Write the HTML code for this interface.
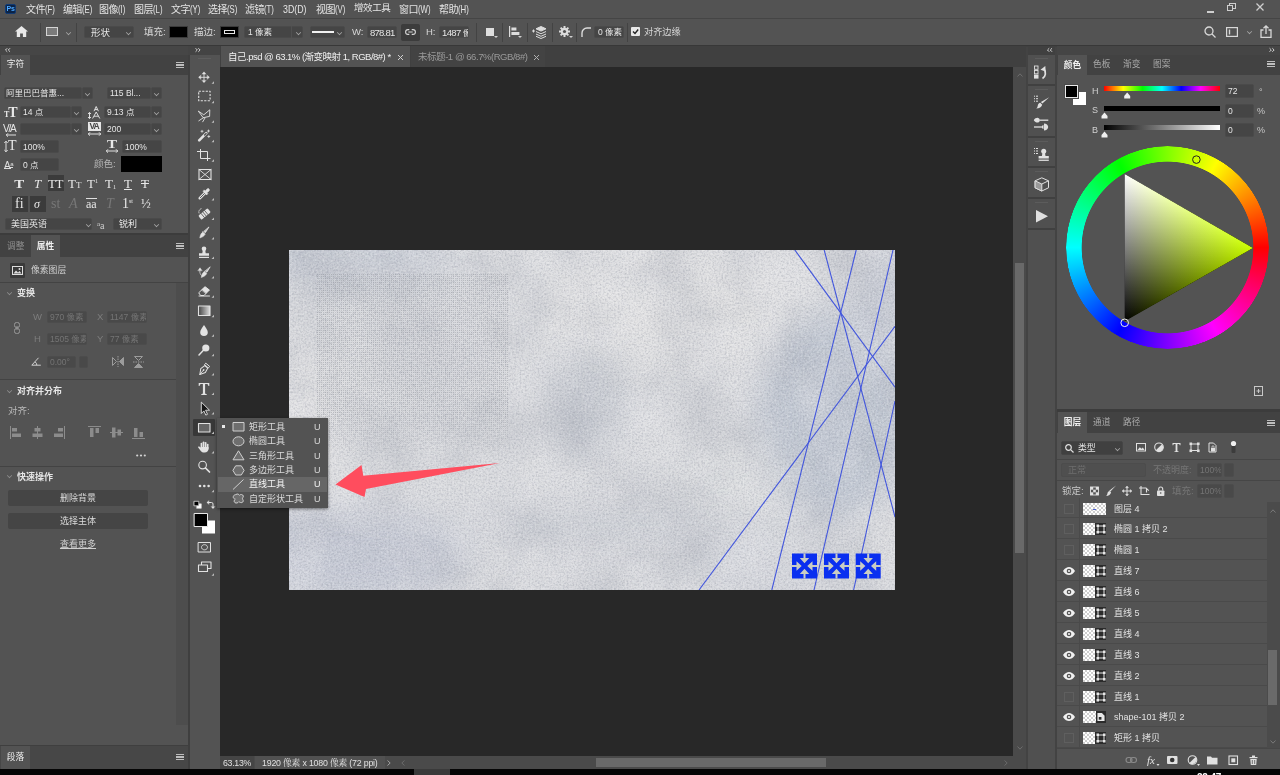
<!DOCTYPE html>
<html lang="zh-CN"><head><meta charset="utf-8"><title>Photoshop</title>
<style>
*{box-sizing:border-box;margin:0;padding:0}
html,body{width:1280px;height:775px;overflow:hidden;background:#535353}
body{position:relative;font-family:"Liberation Sans","Noto Sans CJK SC",sans-serif;font-size:9px;color:#dcdcdc;line-height:1}
.a{position:absolute}
.t{position:absolute;white-space:nowrap;line-height:12px;height:12px;font-size:9px;color:#d8d8d8}
.m{position:absolute;white-space:nowrap;top:3px;line-height:12px;height:12px;font-size:10px;color:#e4e4e4;letter-spacing:-.4px}
.m i{font-style:normal;font-size:10.5px;display:inline-block;transform:scaleX(.74);transform-origin:0 50%;letter-spacing:0}
.in{position:absolute;background:#454545;border:1px solid #4a4a4a;border-radius:2px;color:#e6e6e6;font-size:8.5px;line-height:11px;padding:0 0 0 3px;white-space:nowrap;overflow:hidden}
.in.d{color:#747474;background:#494949;border-color:#4c4c4c}
.dim{color:#7d7d7d}
svg{position:absolute;overflow:visible}
.cv{position:absolute;width:5px;height:5px}
.cv:before{content:"";position:absolute;left:0;top:-1px;width:4px;height:4px;border-right:1px solid #a6a6a6;border-bottom:1px solid #a6a6a6;transform:rotate(45deg) scale(.75)}
.tabbar{position:absolute;background:#424242}
.tab{position:absolute;background:#535353;color:#f0f0f0;font-size:8.7px;line-height:12px;white-space:nowrap;text-align:center}
.tabi{position:absolute;color:#a9a9a9;font-size:8.7px;line-height:12px;white-space:nowrap}
.mn{position:absolute;width:8px;height:6px;background:linear-gradient(#bebebe 0 1.300px,transparent 0 2.350px,#bebebe 0 3.650px,transparent 0 4.700px,#bebebe 0 6px)}
.vs{position:absolute;width:1px;background:#434343}
.hs{position:absolute;height:1px;background:#434343}
.hd{position:absolute;font-size:9px;font-weight:bold;color:#e6e6e6;white-space:nowrap;line-height:12px}
.btn{position:absolute;background:#454545;border-radius:2px;color:#dcdcdc;font-size:9px;line-height:16px;text-align:center}
.lr{position:absolute;left:1057px;width:210px;height:21px;border-bottom:1px solid #4a4a4a}
.ln{position:absolute;left:57px;top:5px;font-size:9px;line-height:12px;color:#e2e2e2;white-space:nowrap}
.cb{position:absolute;left:7px;top:6px;width:10px;height:10px;border:1px solid #5f5f5f}
.th{position:absolute;left:26px;top:5px;width:23px;height:12px;background:#2b2b2b}
.ck{position:absolute;left:0;top:0;width:12px;height:12px;background-color:#fff;background-image:conic-gradient(#cfcfcf 25%,#fff 0 50%,#cfcfcf 0 75%,#fff 0);background-size:4px 4px}
</style></head><body><div id="root" style="position:absolute;left:0;top:0;width:1280px;height:775px;will-change:transform">
<!-- ===== MENU BAR ===== -->
<div class="a" style="left:0;top:0;width:1280px;height:18px;background:#535353">
 <div class="a" style="left:5px;top:4px;width:11px;height:10px;background:#0a2347;border:1px solid #123a72;border-radius:2px;color:#4aa8ff;font-size:7px;font-weight:bold;line-height:8px;text-align:center;letter-spacing:-.4px">Ps</div>
 <div class="m" style="left:26px">文件<i>(F)</i></div>
 <div class="m" style="left:63px">编辑<i>(E)</i></div>
 <div class="m" style="left:99px">图像<i>(I)</i></div>
 <div class="m" style="left:134px">图层<i>(L)</i></div>
 <div class="m" style="left:171px">文字<i>(Y)</i></div>
 <div class="m" style="left:208px">选择<i>(S)</i></div>
 <div class="m" style="left:245px">滤镜<i>(T)</i></div>
 <div class="m" style="left:283px"><i style="font-size:10.5px;transform:scaleX(.84)">3D(D)</i></div>
 <div class="m" style="left:316px">视图<i>(V)</i></div>
 <div class="m" style="left:354px;top:2px;font-size:9.5px">增效工具</div>
 <div class="m" style="left:399px">窗口<i>(W)</i></div>
 <div class="m" style="left:439px">帮助<i>(H)</i></div>
 <!-- window controls -->
 <div class="a" style="left:1207px;top:11px;width:7px;height:2px;background:#cfcfcf"></div>
 <svg style="left:1227px;top:3px" width="9" height="8" viewBox="0 0 9 8" fill="none" stroke="#cfcfcf" stroke-width="1"><rect x="2.5" y="0.5" width="6" height="5"/><rect x="0.5" y="2.5" width="5" height="5" fill="#535353"/></svg>
 <svg style="left:1256px;top:3px" width="8" height="8" viewBox="0 0 8 8" stroke="#cfcfcf" stroke-width="1.3"><path d="M.5.5l7 7M7.5.5l-7 7"/></svg>
</div>
<div class="a" style="left:0;top:18px;width:1280px;height:1px;background:#454545"></div>

<!-- ===== OPTIONS BAR ===== -->
<div class="a" style="left:0;top:19px;width:1280px;height:26px;background:#535353">
 <!-- home -->
 <svg style="left:15px;top:7px" width="13" height="11" viewBox="0 0 13 11"><path d="M6.5 0L0 5.6h1.8V11h3.3V7.4h2.8V11h3.3V5.6H13z" fill="#e8e8e8"/></svg>
 <div class="vs" style="left:40px;top:4px;height:19px"></div>
 <!-- rect tool -->
 <div class="a" style="left:46px;top:8px;width:12px;height:9px;border:1px solid #d4d4d4;background:#7b7b7b"></div>
 <div class="cv" style="left:66px;top:12px"></div>
 <div class="vs" style="left:76px;top:4px;height:19px"></div>
 <div class="in" style="left:84px;top:7px;width:50px;height:12px;padding-left:6px;font-size:9.5px">形状</div>
 <div class="cv" style="left:126px;top:12px"></div>
 <div class="t" style="left:144px;top:7px;font-size:9.5px">填充:</div>
 <div class="a" style="left:169px;top:7px;width:19px;height:12px;background:#000;border:1px solid #3a3a3a"></div>
 <div class="t" style="left:194px;top:7px;font-size:9.5px">描边:</div>
 <div class="a" style="left:220px;top:7px;width:19px;height:12px;background:#000;border:1px solid #3a3a3a"></div>
 <div class="a" style="left:224px;top:11px;width:11px;height:4px;border:1px solid #e6e6e6"></div>
 <div class="in" style="left:244px;top:7px;width:59px;height:12px;font-size:8.5px">1 像素</div>
 <div class="vs" style="left:291px;top:7px;height:12px;background:#505050"></div>
 <div class="cv" style="left:296px;top:12px"></div>
 <div class="in" style="left:310px;top:7px;width:35px;height:12px"></div>
 <div class="a" style="left:312px;top:12px;width:22px;height:2px;background:#f0f0f0"></div>
 <div class="cv" style="left:337px;top:12px"></div>
 <div class="t" style="left:352px;top:7px;font-size:9.5px">W:</div>
 <div class="in" style="left:367px;top:7px;width:30px;height:12px;font-size:9.5px;padding-left:2px;letter-spacing:-.75px">878.81</div>
 <div class="a" style="left:401px;top:5px;width:19px;height:17px;background:#3c3c3c;border-radius:2px"></div>
 <svg style="left:405px;top:10px" width="11" height="6" viewBox="0 0 11 6" fill="none" stroke="#d8d8d8" stroke-width="1.1"><path d="M4.300.6H3a2.400 2.400 0 0 0 0 4.800h1.300M6.700.6H8a2.400 2.400 0 0 1 0 4.800H6.700M3.300 3h4.400"/></svg>
 <div class="t" style="left:426px;top:7px;font-size:9.5px">H:</div>
 <div class="in" style="left:439px;top:7px;width:30px;height:12px;font-size:9.5px;padding-left:2px;letter-spacing:-.6px">1487 <span style="font-size:8.5px">像</span></div>
 <div class="vs" style="left:476px;top:4px;height:19px"></div>
 <!-- path ops -->
 <div class="a" style="left:486px;top:9px;width:8px;height:8px;background:#dedede"></div>
 <div class="a" style="left:494px;top:17px;width:0;height:0;border-left:2px solid transparent;border-right:2px solid transparent;border-top:2px solid #d0d0d0"></div>
 <!-- align -->
 <svg style="left:509px;top:7px" width="11" height="12" viewBox="0 0 11 12" fill="#dcdcdc"><rect x="0" y="0" width="1.2" height="11"/><rect x="2.4" y="1.5" width="5" height="3"/><rect x="2.4" y="6" width="8" height="3"/></svg>
 <div class="a" style="left:518px;top:17px;width:0;height:0;border-left:2px solid transparent;border-right:2px solid transparent;border-top:2px solid #d0d0d0"></div>
 <!-- arrange -->
 <svg style="left:532px;top:6px" width="15" height="14" viewBox="0 0 15 14" fill="none" stroke="#dcdcdc" stroke-width="1"><path d="M9 1.5l5 2.3-5 2.3-5-2.3z" fill="#dcdcdc"/><path d="M4 6.5l5 2.3 5-2.3M4 9l5 2.3L14 9M4 11.3l5 2.2 5-2.2"/><path d="M0 6h3M1.5 4.5v3" stroke-width="1"/></svg>
 <!-- gear -->
 <svg style="left:559px;top:7px" width="11" height="11" viewBox="0 0 11 11"><g fill="#dcdcdc"><circle cx="5.5" cy="5.5" r="3.7"/><g id="gt"><rect x="4.5" y="0" width="2" height="11"/><rect x="0" y="4.5" width="11" height="2"/></g><use href="#gt" transform="rotate(45 5.5 5.5)"/></g><circle cx="5.5" cy="5.5" r="1.6" fill="#535353"/></svg>
 <div class="a" style="left:569px;top:17px;width:0;height:0;border-left:2px solid transparent;border-right:2px solid transparent;border-top:2px solid #d0d0d0"></div>
 <div class="vs" style="left:576px;top:4px;height:19px"></div><div class="vs" style="left:502px;top:4px;height:19px"></div><div class="vs" style="left:527px;top:4px;height:19px"></div><div class="vs" style="left:552px;top:4px;height:19px"></div><div class="vs" style="left:627px;top:4px;height:19px"></div>
 <svg style="left:581px;top:8px" width="10" height="10" viewBox="0 0 10 10" fill="none" stroke="#dcdcdc" stroke-width="1.4"><path d="M1 10V6a5 5 0 0 1 5-5h4"/></svg>
 <div class="in" style="left:594px;top:7px;width:30px;height:12px;font-size:8.5px;padding-left:3px">0 像素</div>
 <div class="a" style="left:631px;top:8px;width:9px;height:9px;background:#e8e8e8;border-radius:1px"></div>
 <svg style="left:632px;top:9px" width="7" height="7" viewBox="0 0 7 7" fill="none" stroke="#222" stroke-width="1.4"><path d="M1 3.5l2 2 3.2-4"/></svg>
 <div class="t" style="left:644px;top:7px;font-size:9.2px">对齐边缘</div>
 <!-- right icons -->
 <svg style="left:1204px;top:7px" width="12" height="12" viewBox="0 0 12 12" fill="none" stroke="#d8d8d8" stroke-width="1.3"><circle cx="5" cy="5" r="4"/><path d="M8 8l3.5 3.5"/></svg>
 <svg style="left:1226px;top:8px" width="12" height="10" viewBox="0 0 12 10" fill="none" stroke="#d8d8d8" stroke-width="1.2"><rect x=".6" y=".6" width="10.8" height="8.8"/><path d="M3.5 2.5v5" stroke-width="1.4"/></svg>
 <div class="cv" style="left:1247px;top:11px"></div>
 <svg style="left:1260px;top:6px" width="12" height="13" viewBox="0 0 12 13" fill="none" stroke="#d8d8d8" stroke-width="1.3"><path d="M3.5 5H1v7.3h10V5H8.5M6 9V1M3.5 3.2L6 .8l2.5 2.4"/></svg>
</div>
<div class="a" style="left:0;top:45px;width:1280px;height:1px;background:#383838"></div>
<!-- ===== LEFT PANEL ===== -->
<div class="a" style="left:0;top:47px;width:188px;height:722px;background:#535353"></div>
<div class="a" style="left:0;top:46px;width:190px;height:9px;background:#464646"></div>
<svg style="left:4.500px;top:48px" width="5.600" height="4" viewBox="0 0 7 5" fill="none" stroke="#d8d8d8" stroke-width="1.200"><path d="M2.800.3L.6 2.500l2.200 2.200M6.300.3L4.100 2.500l2.200 2.200"/></svg>
<div class="tabbar" style="left:0;top:55px;width:188px;height:20px"></div>
<div class="tab" style="left:1px;top:55px;width:29px;height:21px;padding-top:3px">字符</div>
<div class="mn" style="left:176px;top:62px"></div>

<!-- character rows -->
<div class="in" style="left:4px;top:87px;width:78px;height:12px;padding-left:1px">阿里巴巴普惠...</div>
<div class="in" style="left:82px;top:87px;width:11px;height:12px"></div><div class="cv" style="left:85px;top:92px"></div>
<div class="in" style="left:107px;top:87px;width:44px;height:12px;padding-left:2px">115 Bl...</div>
<div class="in" style="left:151px;top:87px;width:11px;height:12px"></div><div class="cv" style="left:154px;top:92px"></div>

<div class="t" style="left:4px;top:106px;font-family:'Liberation Serif',serif;font-size:8px;color:#e8e8e8;line-height:14px"><b>T</b><b style="font-size:14px;margin-left:-1px">T</b></div>
<div class="in" style="left:20px;top:106px;width:51px;height:12px;padding-left:2px">14 点</div>
<div class="in" style="left:71px;top:106px;width:11px;height:12px"></div><div class="cv" style="left:74px;top:111px"></div>
<svg style="left:88px;top:106px" width="13" height="13" viewBox="0 0 13 13" fill="none" stroke="#e0e0e0" stroke-width="1"><path d="M6 5.2L8.2.5l2.2 4.7M7 3.6h2.4M4.6 12.5L8.2 6l3.6 6.5M6 10.2h4.4M1.5 6.5v6M0 8l1.5-1.6L3 8M0 11l1.5 1.6L3 11"/></svg>
<div class="in" style="left:104px;top:106px;width:47px;height:12px;padding-left:2px">9.13 点</div>
<div class="in" style="left:151px;top:106px;width:11px;height:12px"></div><div class="cv" style="left:154px;top:111px"></div>

<div class="t" style="left:3px;top:123px;font-size:10px;color:#e8e8e8;letter-spacing:-1.2px">V/A</div>
<svg style="left:6px;top:133px" width="10" height="4" viewBox="0 0 10 4" fill="none" stroke="#e0e0e0" stroke-width="1"><path d="M0 2h10M2 .3L.3 2 2 3.7"/></svg>
<div class="in" style="left:20px;top:123px;width:51px;height:12px"></div>
<div class="in" style="left:71px;top:123px;width:11px;height:12px"></div><div class="cv" style="left:74px;top:128px"></div>
<div class="a" style="left:88px;top:122px;width:13px;height:9px;background:#e6e6e6;color:#444;font-size:8.5px;line-height:9px;font-weight:bold;letter-spacing:-1px;text-align:center;padding-right:1px">VA</div>
<svg style="left:88px;top:132px" width="13" height="4" viewBox="0 0 13 4" fill="none" stroke="#e0e0e0" stroke-width="1"><path d="M0 2h13M2 .3L.3 2 2 3.7M11 .3L12.7 2 11 3.7"/></svg>
<div class="in" style="left:104px;top:123px;width:47px;height:12px;padding-left:2px">200</div>
<div class="in" style="left:151px;top:123px;width:11px;height:12px"></div><div class="cv" style="left:154px;top:128px"></div>

<svg style="left:4px;top:141px" width="4" height="11" viewBox="0 0 4 11" fill="none" stroke="#e0e0e0" stroke-width="1"><path d="M2 0v11M.3 2L2 .3 3.7 2M.3 9L2 10.7 3.7 9"/></svg>
<div class="t" style="left:8px;top:139px;font-family:'Liberation Serif',serif;font-size:14px;line-height:14px;color:#e8e8e8">T</div>
<div class="in" style="left:20px;top:140px;width:39px;height:13px;padding:1px 0 0 2px">100%</div>
<div class="t" style="left:108px;top:138px;font-family:'Liberation Serif',serif;font-size:12px;line-height:12px;color:#e8e8e8;transform:scaleX(1.25);font-weight:bold">T</div>
<svg style="left:106px;top:149px" width="12" height="4" viewBox="0 0 12 4" fill="none" stroke="#e0e0e0" stroke-width="1"><path d="M0 2h12M2 .3L.3 2 2 3.7M10 .3L11.7 2 10 3.7"/></svg>
<div class="in" style="left:122px;top:140px;width:40px;height:13px;padding:1px 0 0 2px">100%</div>

<div class="t" style="left:4px;top:158px;font-size:10px;color:#e0e0e0;letter-spacing:-.5px">A<span style="font-size:6px;vertical-align:3px;border-bottom:1px solid #ddd">a</span></div>
<div class="a" style="left:4px;top:168px;width:7px;height:1px;background:#ddd"></div>
<div class="in" style="left:20px;top:158px;width:39px;height:13px;padding:1px 0 0 2px">0 点</div>
<div class="t" style="left:94px;top:158px;font-size:9.5px;color:#b4b4b4">颜色:</div>
<div class="a" style="left:121px;top:156px;width:41px;height:16px;background:#000"></div>

<!-- T style row -->
<div class="a" style="left:48px;top:175px;width:16px;height:16px;background:#3b3b3b"></div>
<div class="t" style="left:0;top:177px;width:188px;font-family:'Liberation Serif',serif;font-size:13px;line-height:13px;color:#e8e8e8">
 <b class="a" style="left:15px;transform:scaleX(1.15)">T</b>
 <i class="a" style="left:34px">T</i>
 <span class="a" style="left:48px;letter-spacing:-.5px">TT</span>
 <span class="a" style="left:68px">T<span style="font-size:9px">T</span></span>
 <span class="a" style="left:87px">T<span style="font-size:6px;position:relative;top:-5px">1</span></span>
 <span class="a" style="left:105px">T<span style="font-size:6px;position:relative;top:1px">1</span></span>
 <span class="a" style="left:124px;text-decoration:underline">T</span>
 <span class="a" style="left:141px;text-decoration:line-through">T</span>
</div>
<!-- fi row -->
<div class="a" style="left:12px;top:196px;width:16px;height:16px;background:#3b3b3b"></div>
<div class="a" style="left:30px;top:196px;width:16px;height:16px;background:#3b3b3b"></div>
<div class="t" style="left:0;top:197px;width:188px;font-family:'Liberation Serif',serif;font-size:14px;line-height:14px;color:#e8e8e8">
 <span class="a" style="left:15px">fi</span>
 <i class="a" style="left:34px;font-size:12px">σ</i>
 <span class="a" style="left:51px;color:#777">st</span>
 <i class="a" style="left:69px;color:#777">A</i>
 <span class="a" style="left:86px;font-size:12px;border-top:1px solid #e0e0e0;line-height:11px;top:1px">aa</span>
 <i class="a" style="left:106px;color:#777">T</i>
 <span class="a" style="left:122px">1<span style="font-size:6px;position:relative;top:-5px">st</span></span>
 <span class="a" style="left:141px;font-size:13px">½</span>
</div>
<div class="in" style="left:5px;top:218px;width:87px;height:12px;padding-left:5px;font-size:9px">美国英语</div><div class="cv" style="left:86px;top:223px"></div>
<div class="t" style="left:97px;top:218px;font-family:'Liberation Serif',serif;font-size:10px;color:#d0d0d0"><span style="font-size:7px;vertical-align:3px">a</span>a</div>
<div class="in" style="left:113px;top:218px;width:49px;height:12px;padding-left:5px;font-size:9px">锐利</div><div class="cv" style="left:154px;top:223px"></div>

<!-- properties panel -->
<div class="a" style="left:0;top:233px;width:188px;height:2px;background:#3c3c3c"></div>
<div class="tabbar" style="left:0;top:235px;width:188px;height:22px"></div>
<div class="tabi" style="left:7px;top:240px;color:#8f8f8f">调整</div>
<div class="tab" style="left:31px;top:235px;width:29px;height:23px;padding-top:5px;font-weight:bold">属性</div>
<div class="mn" style="left:176px;top:243px"></div>
<div class="a" style="left:10px;top:263px;width:15px;height:15px;background:#3a3a3a;border-radius:1px"></div>
<svg style="left:12px;top:266px" width="11" height="9" viewBox="0 0 11 9"><rect x=".5" y=".5" width="10" height="8" fill="none" stroke="#ddd"/><path d="M1.5 7.5l2.5-3 2 2 1.5-1.5 2 2.5z" fill="#ddd"/><circle cx="7.5" cy="3" r="1" fill="#ddd"/></svg>
<div class="t" style="left:31px;top:264px;color:#cfcfcf;font-size:8.8px">像素图层</div>
<div class="hs" style="left:0;top:282px;width:188px"></div>
<div class="a" style="left:176px;top:283px;width:12px;height:442px;background:#4d4d4d"></div>

<div class="cv" style="left:7px;top:291px;opacity:.7"></div>
<div class="hd" style="left:17px;top:287px">变换</div>
<div class="t dim" style="left:33px;top:311px;font-size:9.5px">W</div>
<div class="in d" style="left:47px;top:311px;width:40px;height:12px;padding-left:2px">970 像素</div>
<div class="t dim" style="left:97px;top:311px;font-size:9.5px">X</div>
<div class="in d" style="left:107px;top:311px;width:40px;height:12px;padding-left:2px">1147 像素</div>
<div class="t dim" style="left:34px;top:333px;font-size:9.5px">H</div>
<div class="in d" style="left:47px;top:333px;width:40px;height:12px;padding-left:2px">1505 像素</div>
<div class="t dim" style="left:97px;top:333px;font-size:9.5px">Y</div>
<div class="in d" style="left:107px;top:333px;width:40px;height:12px;padding-left:2px">77 像素</div>
<svg style="left:14px;top:322px" width="6" height="12" viewBox="0 0 6 12" fill="none" stroke="#9a9a9a" stroke-width="1"><rect x=".5" y=".5" width="5" height="5" rx="2"/><rect x=".5" y="6.5" width="5" height="5" rx="2"/><path d="M3 4v4"/></svg>
<svg style="left:31px;top:357px" width="10" height="9" viewBox="0 0 10 9" fill="none" stroke="#d0d0d0" stroke-width="1"><path d="M7.5.8L.8 8.2h9M4 4.8a4 4 0 0 1 1.8 3.4"/></svg>
<div class="in d" style="left:47px;top:356px;width:29px;height:12px;padding-left:2px">0.00°</div>
<div class="in d" style="left:79px;top:356px;width:9px;height:12px"></div>
<svg style="left:112px;top:356px" width="12" height="11" viewBox="0 0 12 11" fill="none" stroke="#9c9c9c" stroke-width="1"><path d="M.5 1.5v8l4-4z"/><path d="M11.5 1.5v8l-4-4z" fill="#9c9c9c"/><path d="M6 0v11" stroke-dasharray="1.5 1"/></svg>
<svg style="left:133px;top:356px" width="11" height="12" viewBox="0 0 11 12" fill="none" stroke="#9c9c9c" stroke-width="1"><path d="M1.5.5h8l-4 4z"/><path d="M1.5 11.5h8l-4-4z" fill="#9c9c9c"/><path d="M0 6h11" stroke-dasharray="1.5 1"/></svg>
<div class="hs" style="left:0;top:379px;width:176px"></div>

<div class="cv" style="left:7px;top:389px;opacity:.7"></div>
<div class="hd" style="left:17px;top:385px">对齐并分布</div>
<div class="t" style="left:8px;top:405px;color:#b8b8b8;font-size:9.5px">对齐:</div>
<svg style="left:10px;top:426px" width="135" height="13" viewBox="0 0 135 13" fill="#8c8c8c">
 <rect x="0" y="0" width="1" height="13"/><rect x="2" y="2" width="5" height="3.5"/><rect x="2" y="7.5" width="9" height="3.5"/>
 <rect x="27" y="0" width="1" height="13"/><rect x="24.5" y="2" width="6" height="3.5"/><rect x="22.5" y="7.5" width="10" height="3.5"/>
 <rect x="54" y="0" width="1" height="13"/><rect x="48" y="2" width="5" height="3.5"/><rect x="44" y="7.5" width="9" height="3.5"/>
 <rect x="78" y="0" width="13" height="1"/><rect x="80" y="2" width="3.5" height="9"/><rect x="85.5" y="2" width="3.5" height="5"/>
 <rect x="100" y="6" width="13" height="1"/><rect x="102" y="1.5" width="3.5" height="10"/><rect x="107.5" y="3.5" width="3.5" height="6"/>
 <rect x="122" y="12" width="13" height="1"/><rect x="124" y="2" width="3.5" height="9"/><rect x="129.5" y="6" width="3.5" height="5"/>
</svg>
<svg style="left:136px;top:454px" width="10" height="3" viewBox="0 0 10 3" fill="#d4d4d4"><circle cx="1.200" cy="1.500" r="1.100"/><circle cx="5" cy="1.500" r="1.100"/><circle cx="8.800" cy="1.500" r="1.100"/></svg>
<div class="hs" style="left:0;top:466px;width:176px"></div>

<div class="cv" style="left:7px;top:474px;opacity:.7"></div>
<div class="hd" style="left:17px;top:471px">快速操作</div>
<div class="btn" style="left:8px;top:490px;width:140px;height:16px">删除背景</div>
<div class="btn" style="left:8px;top:513px;width:140px;height:16px">选择主体</div>
<div class="t" style="left:8px;top:538px;width:140px;text-align:center;text-decoration:underline;color:#d0d0d0">查看更多</div>

<div class="a" style="left:0;top:745px;width:188px;height:1px;background:#3f3f3f"></div>
<div class="tabbar" style="left:0;top:746px;width:188px;height:23px;background:#474747"></div>
<div class="tab" style="left:1px;top:746px;width:29px;height:23px;padding-top:5px">段落</div>
<div class="mn" style="left:176px;top:754px"></div>
<div class="a" style="left:188px;top:55px;width:2px;height:714px;background:#3f3f3f"></div>
<!-- ===== TOOLBAR ===== -->
<div class="a" style="left:190px;top:47px;width:30px;height:722px;background:#535353"></div>
<div class="a" style="left:188px;top:46px;width:33px;height:9px;background:#444"></div>
<svg style="left:194.500px;top:48px" width="5.600" height="4" viewBox="0 0 7 5" fill="none" stroke="#d8d8d8" stroke-width="1.200"><path d="M.7.3l2.200 2.200L.7 4.700M4.200.3l2.200 2.200-2.200 2.200"/></svg>
<div class="a" style="left:198px;top:58px;width:13px;height:1px;background:#5e5e5e"></div>
<div class="a" style="left:193px;top:419px;width:22px;height:17px;background:#383838;border-radius:1px"></div>
<svg style="left:190px;top:47px" width="29" height="540" viewBox="190 47 29 540" fill="none" stroke="#e2e2e2" stroke-width="1.1" stroke-linecap="round" stroke-linejoin="round">
 <!-- corner ticks -->
 <g fill="#bdbdbd" stroke="none">
  <path d="M214 81.3v2.500h-2.500z"/><path d="M214 100.8v2.500h-2.500z"/><path d="M214 120.3v2.500h-2.500z"/><path d="M214 139.7v2.500h-2.500z"/><path d="M214 159.2v2.500h-2.500z"/>
  <path d="M214 198.1v2.500h-2.500z"/><path d="M214 217.5v2.500h-2.500z"/><path d="M214 237.0v2.500h-2.500z"/><path d="M214 256.4v2.500h-2.500z"/><path d="M214 275.9v2.500h-2.500z"/>
  <path d="M214 295.3v2.500h-2.500z"/><path d="M214 314.8v2.500h-2.500z"/><path d="M214 334.2v2.500h-2.500z"/><path d="M214 353.7v2.500h-2.500z"/><path d="M214 373.1v2.500h-2.500z"/>
  <path d="M214 392.6v2.500h-2.500z"/><path d="M214 412.0v2.500h-2.500z"/><path d="M214 431.5v2.500h-2.500z"/><path d="M214 450.9v2.500h-2.500z"/><path d="M214 489.8v2.500h-2.500z"/><path d="M214 573.3v2.500h-2.500z"/>
 </g>
 <!-- move 204,77.5 -->
 <g transform="translate(204 77.300)"><path d="M0-4v8M-4 0h8" stroke-width=".9"/><path d="M-2-3.300L0-5.500l2 2.200zM-2 3.300L0 5.500l2-2.200zM-3.300-2L-5.500 0l2.200 2zM3.300-2L5.500 0 3.300 2z" fill="#e2e2e2" stroke-width=".3"/></g>
 <!-- marquee 204,96.500 -->
 <rect x="198.700" y="91.300" width="11.400" height="9.400" stroke-dasharray="2.200 1.300" stroke-linecap="butt"/>
 <!-- lasso poly 204,116 -->
 <path d="M198.600 111.300L203.800 114.800 209.800 109.800 209.600 116.400 203.600 117.600z" stroke-width=".9"/><path d="M203.600 117.600L198.800 120.800M205 118l-2.300 3.800" stroke-width=".9"/>
 <!-- wand 204,135.500 -->
 <g transform="translate(204 135.500)"><path d="M-4.800 4.800L2.300-2.300" stroke-width="2.600" stroke-linecap="round"/><path d="M.6-.6l1.500-1.500" stroke="#535353" stroke-width="1.400"/><path d="M-2-5.200v2M-3-4.200h2M4.500-5.500v2M3.500-4.500h2M4.800 0v2M3.800 1h2" stroke-width=".8"/></g>
 <!-- crop 204,155 -->
 <path d="M200.500 149v9.500h10M197 151.500h10.500v9.500" stroke-width="1" stroke-linecap="butt" stroke-linejoin="miter"/>
 <!-- frame 204,174.500 -->
 <g transform="translate(204.500 174.500)"><rect x="-5.500" y="-5" width="12" height="10" stroke-width="1.100"/><path d="M-5.500-5l12 10M6.500-5l-12 10" stroke-width=".9"/></g>
 <!-- eyedropper 204,194 -->
 <g transform="translate(204 194) rotate(45)"><path d="M0-1v7" stroke-width="2.600"/><path d="M0-1v6.200" stroke="#535353" stroke-width=".9"/><rect x="-2.500" y="-3" width="5" height="1.800" fill="#e2e2e2" stroke-width=".5"/><rect x="-1.400" y="-7" width="2.800" height="4.500" rx="1.200" fill="#e2e2e2" stroke-width=".5"/></g>
 <!-- heal 204,213.500 -->
 <g transform="translate(204.500 214) rotate(-40)"><rect x="-6" y="-2.600" width="12" height="5.200" rx="1.200" fill="#e2e2e2" stroke="none"/><path d="M-2.300-2.600v5.200M0-2.600v5.200M2.300-2.600v5.200" stroke="#535353" stroke-width=".8"/></g>
 <path d="M199 213a3.500 3.500 0 0 1 3-4.500" stroke-width=".8" stroke-dasharray="1 1"/>
 <!-- brush 204,233 -->
 <g transform="translate(204 233) rotate(40)"><path d="M0-7.500L.9-1H-.9z" fill="#e2e2e2" stroke-width=".7"/><path d="M-1.600 0h3.200c.6 2.500-.4 4.500-1.600 6.500C-1.200 4.500-2.200 2.500-1.600 0z" fill="#e2e2e2" stroke-width=".5"/></g>
 <!-- stamp 204,252.500 -->
 <g transform="translate(204 252.500)" fill="#e2e2e2" stroke="none"><circle cx="0" cy="-3.800" r="2.300"/><path d="M-1.200-2.500h2.400l.5 3.200h3.300v2.500h-10V.7h3.300z"/><rect x="-5" y="4.300" width="10" height="1.200"/></g>
 <!-- history brush 204,272 -->
 <g transform="translate(205.500 272.500) rotate(40)"><path d="M0-7L.9-1H-.9z" fill="#e2e2e2" stroke-width=".7"/><path d="M-1.600 0h3.200c.6 2.500-.4 4.500-1.600 6.500C-1.200 4.500-2.200 2.500-1.600 0z" fill="#e2e2e2" stroke-width=".5"/></g>
 <path d="M198 270.500l2-2.700 2 2.700z" fill="#e2e2e2" stroke-width=".4"/><path d="M200 270.500a5 5 0 0 0 1.500 5" stroke-width=".8" stroke-dasharray="1 1"/>
 <!-- eraser 204,291.500 -->
 <g transform="translate(204 291)"><path d="M-5 1.500L1-4.200 5.300-1 0 4.500h-3z" stroke-width="1"/><path d="M-2.200-1.200L1-4.200 5.300-1 2 2.300z" fill="#e2e2e2" stroke-width=".6"/><path d="M-5 5h10.500" stroke-width="1"/></g>
 <!-- gradient 204,311 -->
 <defs><linearGradient id="tg" x1="0" x2="1"><stop offset="0" stop-color="#444"/><stop offset="1" stop-color="#ddd"/></linearGradient></defs>
 <rect x="198.500" y="306" width="11.500" height="9.500" fill="url(#tg)" stroke-width="1.100"/>
 <!-- blur 204,330.500 -->
 <path d="M204 325c1.500 2.600 3.800 4.700 3.800 7.200a3.800 3.800 0 0 1-7.600 0c0-2.500 2.300-4.600 3.800-7.200z" fill="#e2e2e2" stroke="none"/>
 <!-- dodge 204,350 -->
 <g transform="translate(204 350)"><circle cx="1.800" cy="-2" r="3.600" fill="#e2e2e2" stroke="none"/><path d="M-.8.600L-5 5" stroke-width="1.500"/></g>
 <!-- pen 204,369.500 -->
 <g transform="translate(204 369.500) rotate(40)"><path d="M0 6.500L-3 1.500-2-3.500h4l1 5z" stroke-width="1"/><path d="M0 6.500V1.300" stroke-width=".8"/><circle cx="0" cy=".6" r=".9" fill="#e2e2e2" stroke="none"/><rect x="-2.300" y="-6" width="4.600" height="2" stroke-width=".9"/></g>
 <!-- T 204,389 -->
 <g transform="translate(204 389)" fill="#e2e2e2" stroke="none"><path d="M-5.300-6h10.600v3h-.9c-.2-1.300-.7-1.900-2-1.900h-1.300v9c0 .8.400 1 1.700 1.100v.8h-5.600v-.8c1.300-.1 1.700-.3 1.700-1.100v-9h-1.300c-1.300 0-1.800.6-2 1.900h-.9z"/></g>
 <!-- path select 204,408.500 -->
 <path d="M201.300 402.500v11l2.600-2.600 1.900 4.200 1.700-.8-1.900-4.100h3.500z" fill="#161616" stroke="#e2e2e2" stroke-width=".9"/>
 <!-- rect (selected) 204,428 -->
 <rect x="198.500" y="423.500" width="11.500" height="8.500" fill="#666" stroke-width="1.100"/>
 <!-- hand 204,447 -->
 <g transform="translate(204 447)" fill="#e2e2e2" stroke="none"><rect x="-3.400" y="-4.300" width="1.700" height="6" rx=".85"/><rect x="-1.300" y="-5.600" width="1.700" height="7" rx=".85"/><rect x=".8" y="-5" width="1.700" height="7" rx=".85"/><rect x="2.900" y="-3.300" width="1.600" height="6" rx=".8"/><path d="M-3.400 0h7.900v1.500c0 2.500-1.600 4-3.800 4h-.8c-1.500 0-2.400-.6-3.300-1.800l-2.400-3.200c-.5-.7.500-1.500 1.200-.9l1.200 1.100z"/></g>
 <!-- zoom 204,466.500 -->
 <g transform="translate(204 466.500)"><circle cx="-1.400" cy="-1.400" r="3.800" stroke-width="1.100"/><path d="M1.500 1.500l4 4" stroke-width="1.700"/></g>
 <!-- dots -->
 <g fill="#e2e2e2" stroke="none"><circle cx="200" cy="486" r="1.300"/><circle cx="204.300" cy="486" r="1.300"/><circle cx="208.600" cy="486" r="1.300"/></g>
 <!-- default colours / swap -->
 <rect x="196.800" y="503.800" width="4.500" height="4.500" fill="#fff" stroke="#ddd" stroke-width=".6"/><rect x="194.300" y="501.300" width="4.500" height="4.500" fill="#000" stroke="#ddd" stroke-width=".8"/>
 <path d="M208 502.500h3.500a1.500 1.500 0 0 1 1.500 1.500v3.500" stroke-width="1"/><path d="M208.800 500.700l-2 1.800 2 1.800zM211.200 506.700l1.800 2 1.800-2z" fill="#e2e2e2" stroke-width=".3"/>
 <!-- fg/bg -->
 <rect x="202" y="520.500" width="13" height="13" fill="#fff" stroke="none"/>
 <rect x="194.500" y="513.500" width="13" height="13" fill="#000" stroke="#e8e8e8" stroke-width="1"/>
 <!-- quick mask -->
 <rect x="198.500" y="542.500" width="12" height="9.500" stroke-width="1"/><ellipse cx="204.500" cy="547.250" rx="3" ry="2.600" stroke-width=".9" stroke-dasharray="1.200 .8"/>
 <!-- screen mode -->
 <rect x="201.500" y="562" width="9.500" height="6.500" stroke-width="1.100"/><rect x="198.500" y="565" width="9" height="6.500" fill="#535353" stroke-width="1.100"/>
</svg>

<!-- ===== DOC AREA ===== -->
<div class="a" style="left:220px;top:46px;width:806px;height:21px;background:#404040"></div>
<div class="a" style="left:221px;top:46px;width:189px;height:21px;background:#535353"></div>
<div class="t" id="tab1" style="left:228px;top:51px;font-size:9.5px;color:#f0f0f0;letter-spacing:-.5px">自己.psd @ 63.1% (渐变映射 1, RGB/8#) *</div>
<svg style="left:398px;top:55px" width="5" height="5" viewBox="0 0 5 5" stroke="#d0d0d0" stroke-width="1"><path d="M0 0l5 5M5 0L0 5"/></svg>
<div class="a" style="left:411px;top:46px;width:134px;height:21px;background:#434343"></div>
<div class="t" id="tab2" style="left:418px;top:51px;font-size:9.5px;color:#9a9a9a;letter-spacing:-.45px">未标题-1 @ 66.7%(RGB/8#)</div>
<svg style="left:534px;top:55px" width="5" height="5" viewBox="0 0 5 5" stroke="#b0b0b0" stroke-width="1"><path d="M0 0l5 5M5 0L0 5"/></svg>
<div class="a" style="left:220px;top:67px;width:793px;height:689px;background:#282828"></div>

<!-- canvas image -->
<div class="a" id="canvas" style="left:289px;top:250px;width:606px;height:340px;background:#d4d6db;overflow:hidden">
 <svg style="left:0;top:0" width="606" height="340" viewBox="0 0 606 340">
  <defs>
   <filter id="nz" x="0" y="0" width="100%" height="100%" color-interpolation-filters="sRGB"><feTurbulence type="fractalNoise" baseFrequency="0.55" numOctaves="2" seed="3"/><feColorMatrix values="0 0 0 0 .47  0 0 0 0 .49  0 0 0 0 .55  0 2.4 0 0 -1.0"/></filter>
   <filter id="nw" x="0" y="0" width="100%" height="100%" color-interpolation-filters="sRGB"><feTurbulence type="fractalNoise" baseFrequency="0.5" numOctaves="1" seed="11"/><feColorMatrix values="0 0 0 0 1  0 0 0 0 1  0 0 0 0 1  0 2.4 0 0 -1.05"/></filter>
   <filter id="cl" x="0" y="0" width="100%" height="100%" color-interpolation-filters="sRGB"><feTurbulence type="fractalNoise" baseFrequency="0.0137" numOctaves="4" seed="5"/><feColorMatrix values="0 0 0 0 .6  0 0 0 0 .62  0 0 0 0 .67  2.4 0 0 0 -.95"/></filter>
   <filter id="cw" x="0" y="0" width="100%" height="100%" color-interpolation-filters="sRGB"><feTurbulence type="fractalNoise" baseFrequency="0.014" numOctaves="3" seed="21"/><feColorMatrix values="0 0 0 0 .93  0 0 0 0 .93  0 0 0 0 .94  0 2.6 0 0 -1.1"/></filter>
   <filter id="bl"><feGaussianBlur stdDeviation="16"/></filter>
   <pattern id="ht" width="2" height="2" patternUnits="userSpaceOnUse"><rect width="1" height="1" fill="#85888f"/></pattern>
   <linearGradient id="hf" x1="0" y1="0" x2="0" y2="1"><stop offset="0" stop-color="#fff"/><stop offset=".75" stop-color="#fff"/><stop offset="1" stop-color="#000"/></linearGradient>
   <mask id="hm"><rect x="27" y="24" width="192" height="186" fill="url(#hf)"/></mask>
  </defs>
  <rect width="606" height="340" fill="#dcdde0"/>
  <g filter="url(#bl)">
   <ellipse cx="60" cy="5" rx="110" ry="28" fill="#cbcfd8" opacity=".9"/>
   <ellipse cx="380" cy="60" rx="130" ry="60" fill="#e2e2e3" opacity=".9"/>
   <ellipse cx="300" cy="150" rx="42" ry="58" fill="#c6c9d0" opacity=".85"/>
   <ellipse cx="545" cy="165" rx="75" ry="105" fill="#bfc5d2" opacity=".9"/>
   <ellipse cx="600" cy="50" rx="40" ry="60" fill="#c8ccd6" opacity=".8"/>
   <ellipse cx="60" cy="305" rx="120" ry="48" fill="#c3c8d4" opacity=".9"/>
   <ellipse cx="330" cy="275" rx="170" ry="20" fill="#c9ccd3" opacity=".8"/>
   <ellipse cx="20" cy="170" rx="40" ry="70" fill="#e0e0e2" opacity=".8"/>
   <ellipse cx="440" cy="230" rx="60" ry="35" fill="#e0e1e3" opacity=".7"/>
   <ellipse cx="150" cy="100" rx="70" ry="55" fill="#d0d2d7" opacity=".7"/>
   <ellipse cx="480" cy="320" rx="80" ry="30" fill="#d0d3da" opacity=".7"/>
  </g>
  <rect width="606" height="340" filter="url(#cl)" opacity=".26"/>
  <rect width="606" height="340" filter="url(#cw)" opacity=".35"/>
  <rect x="27" y="24" width="192" height="186" fill="url(#ht)" opacity=".38" mask="url(#hm)"/>
  <rect width="606" height="340" filter="url(#nz)" opacity=".28"/>
  <rect width="606" height="340" filter="url(#nw)" opacity=".3"/>
  <!-- blue lines -->
  <g stroke="#4256dc" stroke-width="1.1" fill="none">
   <path d="M505.800 0L606 137.200"/>
   <path d="M535.200 0L606 267"/>
   <path d="M567.200 0L482.800 340"/>
   <path d="M604 0L525 340"/>
   <path d="M606 76.300L410 340"/>
   <path d="M606 151L564.600 340"/>
  </g>
  <!-- blue icons -->
  <g id="bi" transform="translate(503 303.500)">
   <rect width="25" height="25" fill="#0a2ff0"/>
   <g fill="#c9ccc4"><path id="ar" d="M11.500 0h2v4.500h3.700L12.500 9.700 7.800 4.500h3.700z"/><use href="#ar" transform="rotate(90 12.500 12.500)"/><use href="#ar" transform="rotate(180 12.500 12.500)"/><use href="#ar" transform="rotate(270 12.500 12.500)"/></g>
  </g>
  <use href="#bi" x="32"/><use href="#bi" x="63.700"/>
 </svg>
</div>

<!-- red arrow -->
<svg style="left:330px;top:455px" width="180" height="50" viewBox="330 455 180 50"><path d="M335.500 484.500L361.500 465l1.800 10.800L500 463 366 489l-1.500 8z" fill="#ff4d5e"/></svg>

<!-- flyout menu -->
<div class="a" style="left:217px;top:418px;width:111px;height:90px;background:#535353;box-shadow:0 1px 3px rgba(0,0,0,.5)"></div>
<div class="a" style="left:218px;top:477px;width:109px;height:15px;background:#666"></div>
<div class="a" style="left:222px;top:425px;width:3px;height:3px;background:#e8e8e8"></div>
<svg style="left:230px;top:419px" width="18" height="88" viewBox="230 419 18 88" fill="#6e6e6e" stroke="#cfcfcf" stroke-width="1" stroke-linejoin="round">
 <rect x="233" y="422.500" width="11" height="8.500"/>
 <ellipse cx="238.500" cy="441.300" rx="5.500" ry="4.500"/>
 <path d="M238.500 450.800l5.500 9h-11z"/>
 <path d="M235.700 465.800h5.600l2.800 4.600-2.800 4.600h-5.600l-2.800-4.600z"/>
 <path d="M233 489.500l10.500-10" fill="none"/>
 <path d="M236 494.500c1.500-1.200 3 0 3.500.8.800-1.300 3.500-1 3.800.7.300 1.500-1.300 1.800-.8 3 .5 1 1.300 1.800.3 3-1.200 1.300-3 .3-4-.3-.7 1.100-2.500 1.800-3.800 1-1.500-1-.8-2.800.3-3.500-1.500-.5-2.300-1.200-2-2.700.3-1.600 2-1.700 2.700-2z"/>
</svg>
<div class="t" style="left:249px;top:421px;color:#dadada">矩形工具</div>
<div class="t" style="left:249px;top:435px;color:#dadada">椭圆工具</div>
<div class="t" style="left:249px;top:450px;color:#dadada">三角形工具</div>
<div class="t" style="left:249px;top:464px;color:#dadada">多边形工具</div>
<div class="t" style="left:249px;top:478px;color:#f4f4f4">直线工具</div>
<div class="t" style="left:249px;top:493px;color:#dadada">自定形状工具</div>
<div class="t" style="left:314px;top:421px;color:#dadada">U</div>
<div class="t" style="left:314px;top:435px;color:#dadada">U</div>
<div class="t" style="left:314px;top:450px;color:#dadada">U</div>
<div class="t" style="left:314px;top:464px;color:#dadada">U</div>
<div class="t" style="left:314px;top:478px;color:#f4f4f4">U</div>
<div class="t" style="left:314px;top:493px;color:#dadada">U</div>

<!-- vertical scrollbar -->
<div class="a" style="left:1013px;top:67px;width:13px;height:689px;background:#4a4a4a"></div>
<div class="a" style="left:1015px;top:263px;width:9px;height:290px;background:#696969"></div>
<svg style="left:1017px;top:73px" width="6" height="4" viewBox="0 0 6 4" fill="none" stroke="#6e6e6e" stroke-width="1"><path d="M.5 3.500L3 .8l2.500 2.700"/></svg>
<svg style="left:1017px;top:746px" width="6" height="4" viewBox="0 0 6 4" fill="none" stroke="#6e6e6e" stroke-width="1"><path d="M.5.500L3 3.200 5.500.5"/></svg>

<!-- status bar -->
<div class="a" style="left:220px;top:756px;width:806px;height:13px;background:#4a4a4a"></div>
<div class="a" style="left:220px;top:756px;width:34px;height:13px;background:#454545"></div>
<div class="t" style="left:223px;top:757px;font-size:8.800px;color:#e0e0e0;letter-spacing:-.3px">63.13%</div>
<div class="a" style="left:255px;top:756px;width:130px;height:13px;background:#515151"></div>
<div class="t" id="stat" style="left:262px;top:757px;font-family:'Liberation Sans','Noto Serif CJK SC',serif;font-size:8.800px;color:#e0e0e0;letter-spacing:-.2px">1920 像素 x 1080 像素 (72 ppi)</div>
<svg style="left:387px;top:760px" width="4" height="6" viewBox="0 0 4 6" fill="none" stroke="#a0a0a0" stroke-width="1"><path d="M.5.500L3.200 3 .5 5.500"/></svg>
<svg style="left:401px;top:760px" width="4" height="6" viewBox="0 0 4 6" fill="none" stroke="#6a6a6a" stroke-width="1"><path d="M3.500.500L.8 3l2.700 2.500"/></svg>
<svg style="left:1004px;top:760px" width="4" height="6" viewBox="0 0 4 6" fill="none" stroke="#6a6a6a" stroke-width="1"><path d="M.5.500L3.200 3 .5 5.500"/></svg>
<div class="a" style="left:596px;top:758px;width:230px;height:9px;background:#696969"></div>
<!-- ===== RIGHT STRIP ===== -->
<div class="a" style="left:1026px;top:46px;width:254px;height:9px;background:#454545"></div><div class="a" style="left:1026px;top:46px;width:31px;height:9px;background:#404040"></div>
<div class="a" style="left:1026px;top:47px;width:2px;height:722px;background:#434343"></div>
<div class="a" style="left:1028px;top:55px;width:27px;height:714px;background:#505050"></div>
<div class="a" style="left:1055px;top:47px;width:2px;height:722px;background:#434343"></div>
<svg style="left:1046.500px;top:48px" width="5.600" height="4" viewBox="0 0 7 5" fill="none" stroke="#d8d8d8" stroke-width="1.200"><path d="M2.800.3L.6 2.500l2.200 2.200M6.300.3L4.100 2.500l2.200 2.200"/></svg>
<svg style="left:1269px;top:48px" width="5.600" height="4" viewBox="0 0 7 5" fill="none" stroke="#d8d8d8" stroke-width="1.200"><path d="M.7.3l2.200 2.200L.7 4.700M4.200.3l2.200 2.200-2.200 2.200"/></svg>
<div class="a" style="left:1028px;top:84px;width:27px;height:2px;background:#404040"></div>
<div class="a" style="left:1028px;top:136px;width:27px;height:2px;background:#404040"></div>
<div class="a" style="left:1028px;top:166px;width:27px;height:2px;background:#404040"></div>
<div class="a" style="left:1028px;top:197px;width:27px;height:2px;background:#404040"></div>
<div class="a" style="left:1028px;top:228px;width:27px;height:2px;background:#404040"></div>
<svg style="left:1028px;top:55px" width="27" height="180" viewBox="1028 55 27 180" fill="#e0e0e0" stroke="none">
 <g fill="#5c5c5c"><rect x="1035" y="58" width="13" height="1"/><rect x="1035" y="89" width="13" height="1"/><rect x="1035" y="141" width="13" height="1"/><rect x="1035" y="171" width="13" height="1"/><rect x="1035" y="202" width="13" height="1"/></g>
 <!-- history -->
 <g><rect x="1034.500" y="66" width="3.500" height="3.300" fill="none" stroke="#e0e0e0" stroke-width=".9"/><rect x="1034.500" y="70.500" width="3.500" height="3.300" fill="none" stroke="#e0e0e0" stroke-width=".9"/><rect x="1034" y="74.600" width="4.500" height="4"/><path d="M1042.500 78.500c3.200-2 4-6.500 1.200-10" fill="none" stroke="#e0e0e0" stroke-width="1.700"/><path d="M1040.500 69.800l4.800-3.800.4 5.400z"/></g>
 <!-- brush settings -->
 <g><path d="M1034 96.200h1M1036 96.200h2M1034 98.700h1M1036 98.700h2M1034 101.200h1M1036 101.200h2" stroke="#e0e0e0" stroke-width="1"/><path d="M1049.200 97.300l-6.800 6.200-1.500-1.500z"/><path d="M1040.300 102.800l1.900 1.900c-.6 2.200-2.800 3.600-6 3.800 1.500-1 1.400-2.300 1.700-3.500.3-1.200 1.200-2 2.400-2.200z"/></g>
 <!-- brushes -->
 <g><path d="M1039.500 120.200h8.800" stroke="#e0e0e0" stroke-width="1.300"/><path d="M1033.800 120.200c1-1.800 3-2.600 4.200-2.300 1.200.3 1.800 1.200 1.800 2.300s-.6 2-1.800 2.300c-1.200.3-3.200-.5-4.200-2.300z"/><path d="M1034 127h8" stroke="#e0e0e0" stroke-width="1.300"/><path d="M1042 125.800l1.500-.8v4l-1.500-.8z"/><path d="M1044 123.500c2.300 0 4.200 1.600 4.200 3.500s-1.900 3.500-4.200 3.500z"/></g>
 <!-- clone source -->
 <g><path d="M1034 148.500h1M1036 148.500h2M1034 151h1M1036 151h2M1034 153.500h1M1036 153.500h2" stroke="#e0e0e0" stroke-width="1"/><circle cx="1043.700" cy="151.300" r="2.500"/><path d="M1042.500 152.500h2.400l.6 3.500h3.300v2.600h-10.200v-2.600h3.300z"/><rect x="1038.600" y="159.600" width="10.200" height="1.300"/></g>
 <!-- 3D -->
 <g stroke="#e0e0e0" stroke-width="1" stroke-linejoin="round"><path d="M1041.800 177.800l6.700 3v7l-6.700 3.200-6.700-3.200v-7z" fill="none"/><path d="M1035.100 180.800l6.700 3.200v7l-6.700-3.200z" fill="#9a9a9a"/><path d="M1041.800 184l6.700-3.200" fill="none"/></g>
 <!-- play -->
 <path d="M1036 210l12 6.200-12 6.200z"/>
</svg>

<!-- ===== COLOR PANEL ===== -->
<div class="a" style="left:1057px;top:55px;width:223px;height:354px;background:#535353"></div>
<div class="tabbar" style="left:1057px;top:55px;width:223px;height:20px"></div>
<div class="tab" style="left:1058px;top:55px;width:29px;height:21px;padding-top:4px;font-weight:bold">颜色</div>
<div class="tabi" style="left:1093px;top:58px">色板</div>
<div class="tabi" style="left:1123px;top:58px">渐变</div>
<div class="tabi" style="left:1153px;top:58px">图案</div>
<div class="mn" style="left:1267px;top:61px"></div>
<div class="a" style="left:1073px;top:92px;width:13px;height:13px;background:#fff"></div>
<div class="a" style="left:1065px;top:85px;width:13px;height:13px;background:#000;border:1px solid #e8e8e8;box-shadow:0 0 0 1px #4a4a4a"></div>
<div class="t" style="left:1092px;top:85px;color:#d0d0d0;font-size:9px">H</div>
<div class="t" style="left:1092px;top:104px;color:#d0d0d0;font-size:9px">S</div>
<div class="t" style="left:1092px;top:124px;color:#d0d0d0;font-size:9px">B</div>
<div class="a" style="left:1104px;top:86px;width:116px;height:5px;background:linear-gradient(90deg,#f00,#ff0 16.600%,#0f0 33.300%,#0ff 50%,#00f 66.600%,#f0f 83.300%,#f00)"></div>
<div class="a" style="left:1104px;top:106px;width:116px;height:5px;background:#000"></div>
<div class="a" style="left:1104px;top:125px;width:116px;height:5px;background:linear-gradient(90deg,#000,#fff)"></div>
<svg style="left:1100px;top:92px" width="40" height="50" viewBox="1100 92 40 50" fill="#f0f0f0"><path d="M1127.200 92.500l3 3.500v2.500h-6V96z"/><path d="M1104.500 112.500l3 3.500v2.500h-6V116z"/><path d="M1104.500 131.500l3 3.500v2.500h-6V135z"/></svg>
<div class="in" style="left:1225px;top:84px;width:29px;height:14px;padding:1px 0 0 2px">72</div>
<div class="in" style="left:1225px;top:104px;width:29px;height:14px;padding:1px 0 0 2px">0</div>
<div class="in" style="left:1225px;top:123px;width:29px;height:14px;padding:1px 0 0 2px">0</div>
<div class="t" style="left:1259px;top:86px;color:#c8c8c8;font-size:9px">°</div>
<div class="t" style="left:1257px;top:105px;color:#c8c8c8;font-size:9px">%</div>
<div class="t" style="left:1257px;top:124px;color:#c8c8c8;font-size:9px">%</div>
<!-- wheel -->
<div class="a" style="left:1066px;top:146px;width:203px;height:203px;border-radius:50%;background:conic-gradient(from 90deg,#f00,#f0f 16.660%,#00f 33.330%,#0ff 50%,#0f0 66.660%,#ff0 83.330%,#f00);-webkit-mask:radial-gradient(circle,transparent 85.500px,#000 86.200px,#000 101px,transparent 101.700px);mask:radial-gradient(circle,transparent 85.500px,#000 86.200px,#000 101px,transparent 101.700px)"></div>
<svg style="left:1120px;top:150px" width="140" height="180" viewBox="1120 150 140 180">
 <defs>
  <linearGradient id="tw" gradientUnits="userSpaceOnUse" x1="1124.700" y1="174" x2="1188.600" y2="284.700"><stop offset="0" stop-color="#fff"/><stop offset="1" stop-color="#fff" stop-opacity="0"/></linearGradient>
  <linearGradient id="ty" gradientUnits="userSpaceOnUse" x1="1253" y1="248" x2="1124.700" y2="248"><stop offset="0" stop-color="#cf0"/><stop offset="1" stop-color="#cf0" stop-opacity="0"/></linearGradient>
 </defs>
 <g style="isolation:isolate">
 <path d="M1124.700 174L1253 248 1124.700 321.300z" fill="#000"/>
 <path d="M1124.700 174L1253 248 1124.700 321.300z" fill="url(#ty)" style="mix-blend-mode:plus-lighter"/>
 <path d="M1124.700 174L1253 248 1124.700 321.300z" fill="url(#tw)" style="mix-blend-mode:plus-lighter"/>
 </g>
 <circle cx="1196.400" cy="159.600" r="3.800" fill="none" stroke="#222" stroke-width="1"/>
 <circle cx="1124.700" cy="322.800" r="3.800" fill="none" stroke="#eee" stroke-width="1"/>
</svg>
<svg style="left:1254px;top:386px" width="9" height="10" viewBox="0 0 9 10" fill="none" stroke="#c8c8c8" stroke-width="1"><rect x=".5" y=".5" width="8" height="9"/><path d="M4.500 3v4M2.500 5h4"/></svg>
<div class="a" style="left:1057px;top:409px;width:223px;height:3px;background:#3c3c3c"></div>

<!-- ===== LAYERS PANEL ===== -->
<div class="a" style="left:1057px;top:412px;width:223px;height:357px;background:#535353"></div>
<div class="tabbar" style="left:1057px;top:412px;width:223px;height:21px"></div>
<div class="tab" style="left:1058px;top:412px;width:29px;height:22px;padding-top:4px;font-weight:bold">图层</div>
<div class="tabi" style="left:1093px;top:416px">通道</div>
<div class="tabi" style="left:1123px;top:416px">路径</div>
<div class="mn" style="left:1267px;top:420px"></div>
<!-- filter row -->
<div class="in" style="left:1061px;top:441px;width:62px;height:14px;padding:1px 0 0 16px;font-size:8.800px;background:#404040;border-color:#454545">类型</div>
<svg style="left:1065px;top:444px" width="9" height="9" viewBox="0 0 9 9" fill="none" stroke="#e0e0e0" stroke-width="1.200"><circle cx="3.500" cy="3.500" r="2.800"/><path d="M5.600 5.600L8.500 8.500"/></svg>
<div class="cv" style="left:1115px;top:447px"></div>
<svg style="left:1134px;top:439px" width="110" height="17" viewBox="1134 440 110 17" fill="#e0e0e0">
 <rect x="1136.500" y="444.500" width="9" height="7.500" fill="none" stroke="#e0e0e0"/><path d="M1137.500 451l2.300-2.800 1.800 1.600 1.200-1.200 1.800 2.400z"/>
 <circle cx="1159" cy="448.300" r="4.300" fill="none" stroke="#e0e0e0" stroke-width="1.100"/><path d="M1155.800 451.300a4.300 4.300 0 0 0 6.200-6z"/>
 <path d="M1172.500 444h8v2.300h-.7c-.2-1-.5-1.400-1.500-1.400h-.9v6.700c0 .6.300.8 1.200.8v.6h-4.200v-.6c.9 0 1.200-.2 1.200-.8v-6.700h-.9c-1 0-1.300.4-1.500 1.400h-.7z"/>
 <g fill="none" stroke="#e0e0e0" stroke-width="1"><rect x="1191" y="445" width="7" height="6.500"/></g><rect x="1189.500" y="443.500" width="2.600" height="2.600"/><rect x="1197" y="443.500" width="2.600" height="2.600"/><rect x="1189.500" y="450.500" width="2.600" height="2.600"/><rect x="1197" y="450.500" width="2.600" height="2.600"/>
 <path d="M1209 444h4.500l2.500 2.500v6.500h-7z" fill="none" stroke="#e0e0e0"/><rect x="1211" y="449" width="4" height="3.500"/><path d="M1212 449v-1.200a1 1 0 0 1 2 0v1.200" fill="none" stroke="#e0e0e0" stroke-width=".8"/>
 <rect x="1231.500" y="445" width="4" height="9" rx="1" fill="#3c3c3c"/><circle cx="1233.500" cy="444.500" r="2.600" fill="#f0f0f0"/>
</svg>
<div class="hs" style="left:1057px;top:459px;width:223px;background:#464646"></div>
<div class="in d" style="left:1061px;top:463px;width:85px;height:14px;padding:1px 0 0 6px;font-size:9px;background:#4f4f4f;border-color:#4c4c4c;color:#6e6e6e">正常</div>
<div class="t dim" style="left:1153px;top:464px;font-size:9px;color:#757575">不透明度:</div>
<div class="in d" style="left:1197px;top:463px;width:25px;height:14px;padding:1px 0 0 2px">100%</div>
<div class="in d" style="left:1224px;top:463px;width:10px;height:14px"></div>
<div class="hs" style="left:1057px;top:480px;width:223px;background:#464646"></div>
<div class="t" style="left:1062px;top:485px;font-size:9.500px;color:#c8c8c8">锁定:</div>
<svg style="left:1088px;top:484px" width="80" height="14" viewBox="1088 484 80 14" fill="#e0e0e0">
 <rect x="1090.500" y="487" width="8" height="8" fill="none" stroke="#e0e0e0" stroke-width=".9"/><rect x="1090.500" y="487" width="2.700" height="2.700"/><rect x="1095.800" y="487" width="2.700" height="2.700"/><rect x="1093.200" y="489.700" width="2.600" height="2.600"/><rect x="1090.500" y="492.300" width="2.700" height="2.700"/><rect x="1095.800" y="492.300" width="2.700" height="2.700"/>
 <path d="M1116 485.500l-5.800 6.200-1-1z"/><path d="M1109.600 491l1.500 1.500c-.5 2-2.300 3.300-5 3.500 1.200-.9 1.200-2 1.400-3 .3-1 1-1.800 2.100-2z"/>
 <g transform="translate(1127 491)" stroke="#e0e0e0" stroke-width="1" fill="none"><path d="M0-4.500v9M-4.500 0h9"/><path d="M-1.500-3.200L0-4.900l1.500 1.700zM-1.500 3.200L0 4.900l1.500-1.700zM-3.200-1.500L-4.900 0l1.700 1.500zM3.200-1.500L4.900 0 3.200 1.500z" fill="#e0e0e0" stroke-width=".4"/></g>
 <g fill="none" stroke="#e0e0e0" stroke-width="1.100"><path d="M1139 488h7l2.800 2.600M1141 486v8.500h8.500M1146.500 488v4.500"/></g>
 <rect x="1157" y="490.500" width="7.400" height="5.500" rx=".8"/><path d="M1158.700 490.500v-1.500a2 2 0 0 1 4 0v1.500" fill="none" stroke="#e0e0e0" stroke-width="1.100"/><circle cx="1160.700" cy="493" r=".8" fill="#535353"/>
</svg>
<div class="t dim" style="left:1172px;top:485px;font-size:9.500px;color:#757575">填充:</div>
<div class="in d" style="left:1197px;top:484px;width:25px;height:14px;padding:1px 0 0 2px">100%</div>
<div class="in d" style="left:1224px;top:484px;width:10px;height:14px"></div>
<!-- layer rows -->
<div class="a" style="left:1057px;top:498px;width:223px;height:250px;overflow:hidden">
<div class="lr" style="left:0;top:0px;height:20px"><div class="cb"></div><div class="th" style="background:none"><div class="ck" style="width:23px;height:12px"></div><div class="a" style="left:10px;top:6px;width:3px;height:1px;background:#4a62d8"></div></div><div class="ln">图层 4</div></div>
<div class="lr" style="left:0;top:20px;height:21px"><div class="cb"></div><div class="th"><div class="ck"></div><svg style="left:13px;top:1px" width="10" height="10" viewBox="0 0 10 10" fill="#e8e8e8"><rect x="2" y="2" width="6" height="6" fill="none" stroke="#e8e8e8" stroke-width="1"/><rect x=".5" y=".5" width="2.500" height="2.500"/><rect x="7" y=".5" width="2.500" height="2.500"/><rect x=".5" y="7" width="2.500" height="2.500"/><rect x="7" y="7" width="2.500" height="2.500"/></svg></div><div class="ln">椭圆 1 拷贝 2</div></div>
<div class="lr" style="left:0;top:41px;height:21px"><div class="cb"></div><div class="th"><div class="ck"></div><svg style="left:13px;top:1px" width="10" height="10" viewBox="0 0 10 10" fill="#e8e8e8"><rect x="2" y="2" width="6" height="6" fill="none" stroke="#e8e8e8" stroke-width="1"/><rect x=".5" y=".5" width="2.500" height="2.500"/><rect x="7" y=".5" width="2.500" height="2.500"/><rect x=".5" y="7" width="2.500" height="2.500"/><rect x="7" y="7" width="2.500" height="2.500"/></svg></div><div class="ln">椭圆 1</div></div>
<div class="lr" style="left:0;top:62px;height:21px"><svg style="left:6px;top:7px" width="12" height="8" viewBox="0 0 12 8"><path d="M0 4C2 1 4 0 6 0s4 1 6 4c-2 3-4 4-6 4S2 7 0 4z" fill="#f0f0f0"/><circle cx="6" cy="4" r="2.300" fill="#535353"/><circle cx="6" cy="4" r="1.100" fill="#f0f0f0"/></svg><div class="th"><div class="ck"></div><svg style="left:13px;top:1px" width="10" height="10" viewBox="0 0 10 10" fill="#e8e8e8"><rect x="2" y="2" width="6" height="6" fill="none" stroke="#e8e8e8" stroke-width="1"/><rect x=".5" y=".5" width="2.500" height="2.500"/><rect x="7" y=".5" width="2.500" height="2.500"/><rect x=".5" y="7" width="2.500" height="2.500"/><rect x="7" y="7" width="2.500" height="2.500"/></svg></div><div class="ln">直线 7</div></div>
<div class="lr" style="left:0;top:83px;height:21px"><svg style="left:6px;top:7px" width="12" height="8" viewBox="0 0 12 8"><path d="M0 4C2 1 4 0 6 0s4 1 6 4c-2 3-4 4-6 4S2 7 0 4z" fill="#f0f0f0"/><circle cx="6" cy="4" r="2.300" fill="#535353"/><circle cx="6" cy="4" r="1.100" fill="#f0f0f0"/></svg><div class="th"><div class="ck"></div><svg style="left:13px;top:1px" width="10" height="10" viewBox="0 0 10 10" fill="#e8e8e8"><rect x="2" y="2" width="6" height="6" fill="none" stroke="#e8e8e8" stroke-width="1"/><rect x=".5" y=".5" width="2.500" height="2.500"/><rect x="7" y=".5" width="2.500" height="2.500"/><rect x=".5" y="7" width="2.500" height="2.500"/><rect x="7" y="7" width="2.500" height="2.500"/></svg></div><div class="ln">直线 6</div></div>
<div class="lr" style="left:0;top:104px;height:21px"><svg style="left:6px;top:7px" width="12" height="8" viewBox="0 0 12 8"><path d="M0 4C2 1 4 0 6 0s4 1 6 4c-2 3-4 4-6 4S2 7 0 4z" fill="#f0f0f0"/><circle cx="6" cy="4" r="2.300" fill="#535353"/><circle cx="6" cy="4" r="1.100" fill="#f0f0f0"/></svg><div class="th"><div class="ck"></div><svg style="left:13px;top:1px" width="10" height="10" viewBox="0 0 10 10" fill="#e8e8e8"><rect x="2" y="2" width="6" height="6" fill="none" stroke="#e8e8e8" stroke-width="1"/><rect x=".5" y=".5" width="2.500" height="2.500"/><rect x="7" y=".5" width="2.500" height="2.500"/><rect x=".5" y="7" width="2.500" height="2.500"/><rect x="7" y="7" width="2.500" height="2.500"/></svg></div><div class="ln">直线 5</div></div>
<div class="lr" style="left:0;top:125px;height:21px"><svg style="left:6px;top:7px" width="12" height="8" viewBox="0 0 12 8"><path d="M0 4C2 1 4 0 6 0s4 1 6 4c-2 3-4 4-6 4S2 7 0 4z" fill="#f0f0f0"/><circle cx="6" cy="4" r="2.300" fill="#535353"/><circle cx="6" cy="4" r="1.100" fill="#f0f0f0"/></svg><div class="th"><div class="ck"></div><svg style="left:13px;top:1px" width="10" height="10" viewBox="0 0 10 10" fill="#e8e8e8"><rect x="2" y="2" width="6" height="6" fill="none" stroke="#e8e8e8" stroke-width="1"/><rect x=".5" y=".5" width="2.500" height="2.500"/><rect x="7" y=".5" width="2.500" height="2.500"/><rect x=".5" y="7" width="2.500" height="2.500"/><rect x="7" y="7" width="2.500" height="2.500"/></svg></div><div class="ln">直线 4</div></div>
<div class="lr" style="left:0;top:146px;height:21px"><svg style="left:6px;top:7px" width="12" height="8" viewBox="0 0 12 8"><path d="M0 4C2 1 4 0 6 0s4 1 6 4c-2 3-4 4-6 4S2 7 0 4z" fill="#f0f0f0"/><circle cx="6" cy="4" r="2.300" fill="#535353"/><circle cx="6" cy="4" r="1.100" fill="#f0f0f0"/></svg><div class="th"><div class="ck"></div><svg style="left:13px;top:1px" width="10" height="10" viewBox="0 0 10 10" fill="#e8e8e8"><rect x="2" y="2" width="6" height="6" fill="none" stroke="#e8e8e8" stroke-width="1"/><rect x=".5" y=".5" width="2.500" height="2.500"/><rect x="7" y=".5" width="2.500" height="2.500"/><rect x=".5" y="7" width="2.500" height="2.500"/><rect x="7" y="7" width="2.500" height="2.500"/></svg></div><div class="ln">直线 3</div></div>
<div class="lr" style="left:0;top:167px;height:21px"><svg style="left:6px;top:7px" width="12" height="8" viewBox="0 0 12 8"><path d="M0 4C2 1 4 0 6 0s4 1 6 4c-2 3-4 4-6 4S2 7 0 4z" fill="#f0f0f0"/><circle cx="6" cy="4" r="2.300" fill="#535353"/><circle cx="6" cy="4" r="1.100" fill="#f0f0f0"/></svg><div class="th"><div class="ck"></div><svg style="left:13px;top:1px" width="10" height="10" viewBox="0 0 10 10" fill="#e8e8e8"><rect x="2" y="2" width="6" height="6" fill="none" stroke="#e8e8e8" stroke-width="1"/><rect x=".5" y=".5" width="2.500" height="2.500"/><rect x="7" y=".5" width="2.500" height="2.500"/><rect x=".5" y="7" width="2.500" height="2.500"/><rect x="7" y="7" width="2.500" height="2.500"/></svg></div><div class="ln">直线 2</div></div>
<div class="lr" style="left:0;top:188px;height:20px"><div class="cb"></div><div class="th"><div class="ck"></div><svg style="left:13px;top:1px" width="10" height="10" viewBox="0 0 10 10" fill="#e8e8e8"><rect x="2" y="2" width="6" height="6" fill="none" stroke="#e8e8e8" stroke-width="1"/><rect x=".5" y=".5" width="2.500" height="2.500"/><rect x="7" y=".5" width="2.500" height="2.500"/><rect x=".5" y="7" width="2.500" height="2.500"/><rect x="7" y="7" width="2.500" height="2.500"/></svg></div><div class="ln">直线 1</div></div>
<div class="lr" style="left:0;top:208px;height:21px"><svg style="left:6px;top:7px" width="12" height="8" viewBox="0 0 12 8"><path d="M0 4C2 1 4 0 6 0s4 1 6 4c-2 3-4 4-6 4S2 7 0 4z" fill="#f0f0f0"/><circle cx="6" cy="4" r="2.300" fill="#535353"/><circle cx="6" cy="4" r="1.100" fill="#f0f0f0"/></svg><div class="th"><div class="ck" style="width:13px"></div><svg style="left:14px;top:1px" width="8" height="10" viewBox="0 0 9 10" fill="#e8e8e8"><path d="M.5.5h5l3 3v6h-8z"/><rect x="2" y="5" width="3" height="3" fill="#2b2b2b"/></svg></div><div class="ln">shape-101 拷贝 2</div></div>
<div class="lr" style="left:0;top:229px;height:21px"><div class="cb"></div><div class="th"><div class="ck"></div><svg style="left:13px;top:1px" width="10" height="10" viewBox="0 0 10 10" fill="#e8e8e8"><rect x="2" y="2" width="6" height="6" fill="none" stroke="#e8e8e8" stroke-width="1"/><rect x=".5" y=".5" width="2.500" height="2.500"/><rect x="7" y=".5" width="2.500" height="2.500"/><rect x=".5" y="7" width="2.500" height="2.500"/><rect x="7" y="7" width="2.500" height="2.500"/></svg></div><div class="ln">矩形 1 拷贝</div></div>
</div>
<div class="a" style="left:1079px;top:498px;width:1px;height:250px;background:#4a4a4a"></div>
<!-- layers scrollbar -->
<div class="a" style="left:1267px;top:502px;width:13px;height:246px;background:#4b4b4b"></div>
<div class="a" style="left:1268px;top:650px;width:9px;height:55px;background:#6a6a6a"></div>
<svg style="left:1270px;top:509px" width="6" height="4" viewBox="0 0 6 4" fill="none" stroke="#7a7a7a" stroke-width="1"><path d="M.5 3.500L3 .8l2.500 2.700"/></svg>
<svg style="left:1270px;top:740px" width="6" height="4" viewBox="0 0 6 4" fill="none" stroke="#7a7a7a" stroke-width="1"><path d="M.5.500L3 3.200 5.500.5"/></svg>
<!-- layers footer -->
<div class="a" style="left:1057px;top:748px;width:223px;height:21px;background:#535353;border-top:1px solid #474747"></div>
<svg style="left:1120px;top:752px" width="145" height="16" viewBox="1120 752 145 16" fill="#e0e0e0">
 <g fill="none" stroke="#8a8a8a" stroke-width="1.100"><rect x="1126" y="757.500" width="6" height="5" rx="2.500"/><rect x="1130.500" y="757.500" width="6" height="5" rx="2.500"/></g>
 <text x="1147" y="764" font-family="Liberation Serif,serif" font-style="italic" font-size="11" fill="#e0e0e0">fx</text><path d="M1156.500 764h3l-1.500 2z"/>
 <rect x="1167" y="756" width="10.500" height="8" rx="1"/><circle cx="1172.200" cy="760" r="2.300" fill="#333"/>
 <circle cx="1192.500" cy="760" r="4.300" fill="none" stroke="#e0e0e0" stroke-width="1.100"/><path d="M1189.400 763a4.300 4.300 0 0 0 6.100-6z"/><path d="M1197 764h3l-1.500 2z"/>
 <path d="M1207 756.500h4l1 1.300h5.500v6.700h-10.500z"/>
 <rect x="1229" y="756" width="8.500" height="8.500" fill="none" stroke="#e0e0e0" stroke-width="1.100"/><rect x="1231.300" y="758.300" width="4" height="4"/>
 <g><rect x="1249.500" y="757" width="8" height="1.200"/><rect x="1252" y="755.500" width="3" height="1.500"/><path d="M1250.300 759h6.400l-.5 6h-5.400z"/><path d="M1252.300 760v4M1254.700 760v4" stroke="#535353" stroke-width=".8"/></g>
</svg>
<!-- ===== BOTTOM ===== -->
<div class="a" style="left:0;top:769px;width:1280px;height:6px;background:#050505"></div>
<div class="a" style="left:414px;top:769px;width:36px;height:6px;background:#3a3a3a"></div>
<div class="t" style="left:1197px;top:773px;font-size:10px;color:#fff;height:2px;overflow:hidden;line-height:10px;font-weight:bold;letter-spacing:-.3px">22:47</div>
</div></body></html>
